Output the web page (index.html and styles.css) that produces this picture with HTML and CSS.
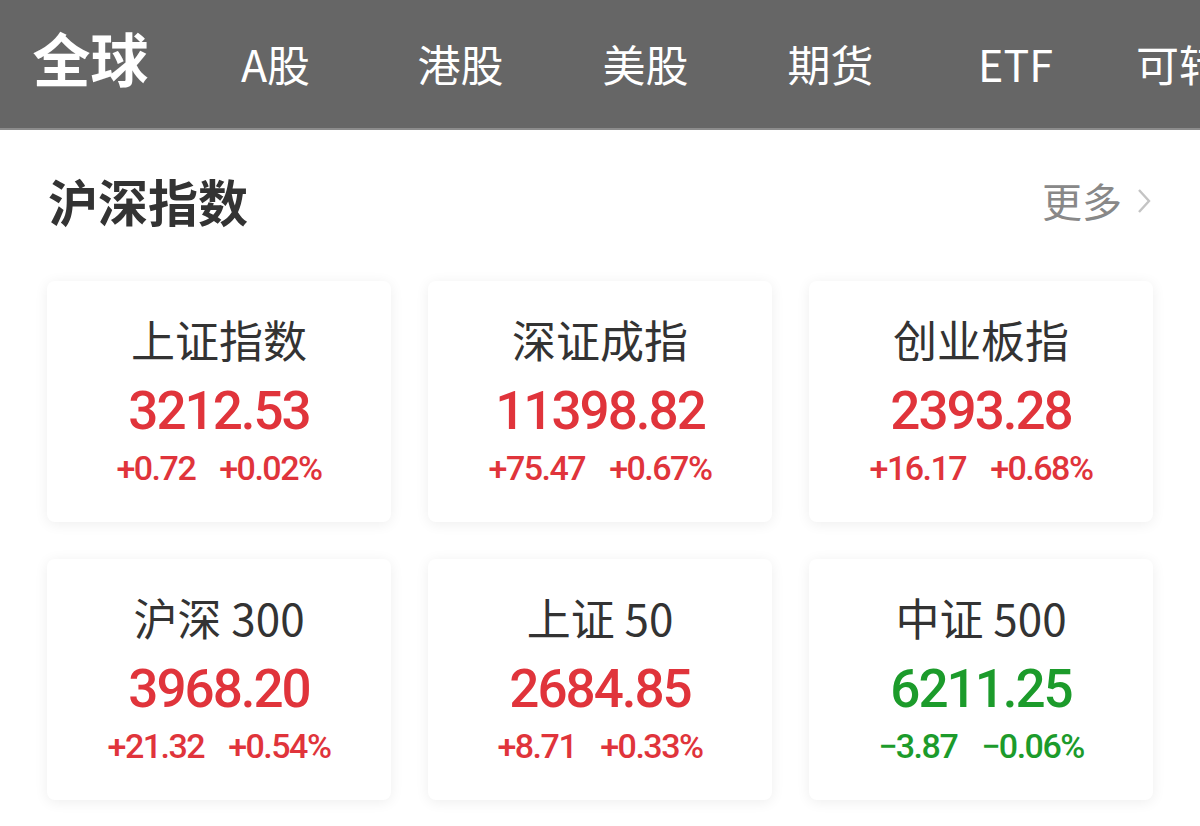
FILE: index.html
```html
<!DOCTYPE html>
<html lang="zh-CN">
<head>
    <meta charset="UTF-8">
    <meta name="viewport" content="width=device-width, initial-scale=1.0">
    <title>沪深指数</title>
    <link rel="stylesheet" href="styles.css">
</head>
<body>
    <div class="topbar">
        <div class="tabs">
            <div class="tab active">全球</div>
            <div class="tab">A股</div>
            <div class="tab">港股</div>
            <div class="tab">美股</div>
            <div class="tab">期货</div>
            <div class="tab">ETF</div>
            <div class="tab">可转债</div>
        </div>
    </div>

    <div class="section-head">
        <h2>沪深指数</h2>
        <a class="more" href="#">更多 <span class="chev">
            <svg width="16" height="26" viewBox="0 0 16 26"><path d="M3 2 L13 13 L3 24" fill="none" stroke="#c4c4c4" stroke-width="2.4"/></svg>
        </span></a>
    </div>

    <div class="grid">
        <div class="card">
            <div class="name">上证指数</div>
            <div class="price up">3212.53</div>
            <div class="change up"><span>+0.72</span><span>+0.02%</span></div>
        </div>
        <div class="card">
            <div class="name">深证成指</div>
            <div class="price up">11398.82</div>
            <div class="change up"><span>+75.47</span><span>+0.67%</span></div>
        </div>
        <div class="card">
            <div class="name">创业板指</div>
            <div class="price up">2393.28</div>
            <div class="change up"><span>+16.17</span><span>+0.68%</span></div>
        </div>
        <div class="card">
            <div class="name">沪深 300</div>
            <div class="price up">3968.20</div>
            <div class="change up"><span>+21.32</span><span>+0.54%</span></div>
        </div>
        <div class="card">
            <div class="name">上证 50</div>
            <div class="price up">2684.85</div>
            <div class="change up"><span>+8.71</span><span>+0.33%</span></div>
        </div>
        <div class="card">
            <div class="name">中证 500</div>
            <div class="price down">6211.25</div>
            <div class="change down"><span>&minus;3.87</span><span>&minus;0.06%</span></div>
        </div>
    </div>
</body>
</html>
```

FILE: styles.css
```css
body {
    margin: 0;
    padding: 0;
    background-color: #fff;
    font-family: "Noto Sans CJK SC", "Noto Sans", sans-serif;
    color: #333;
    width: 1200px;
    height: 826px;
    overflow: hidden;
}
.topbar {
    height: 128px;
    background-color: #666;
    border-bottom: 2px solid #8c8c8c;
    overflow: hidden;
}
.tabs {
    display: flex;
    align-items: baseline;
    margin-left: -2px;
    padding-top: 12px;
    white-space: nowrap;
}
.tab {
    flex: 0 0 185px;
    text-align: center;
    color: #fff;
    font-size: 43px;
    line-height: 90px;
}
.tab.active {
    font-size: 58px;
    font-weight: 700;
}
.section-head {
    display: flex;
    justify-content: space-between;
    align-items: center;
    padding: 30px 48px 0 48px;
    height: 80px;
}
.section-head h2 {
    margin: 0;
    font-size: 50px;
    font-weight: 700;
    color: #333;
}
.more {
    display: flex;
    align-items: center;
    gap: 14px;
    font-size: 40px;
    color: #888;
    text-decoration: none;
}
.chev {
    display: flex;
    padding-top: 2px;
}
.grid {
    display: grid;
    grid-template-columns: repeat(3, 344px);
    column-gap: 37px;
    row-gap: 37px;
    padding: 41px 0 0 47px;
}
.card {
    height: 241px;
    box-sizing: border-box;
    background-color: #fff;
    border-radius: 8px;
    box-shadow: 0 2px 14px rgba(0, 0, 0, 0.07);
    text-align: center;
    padding-top: 30px;
}
.name {
    font-size: 44px;
    line-height: 56px;
    color: #333;
}
.price {
    font-family: Roboto, "Noto Sans", sans-serif;
    font-size: 53px;
    font-weight: 500;
    letter-spacing: -2px;
    line-height: 68px;
    margin-top: 10px;
}
.change {
    display: flex;
    justify-content: center;
    gap: 24px;
    font-family: Roboto, "Noto Sans", sans-serif;
    font-size: 34px;
    font-weight: 500;
    letter-spacing: -1.5px;
    line-height: 40px;
    margin-top: 3px;
}
.up {
    color: #e0343b;
}
.down {
    color: #1c9b2b;
}
```
